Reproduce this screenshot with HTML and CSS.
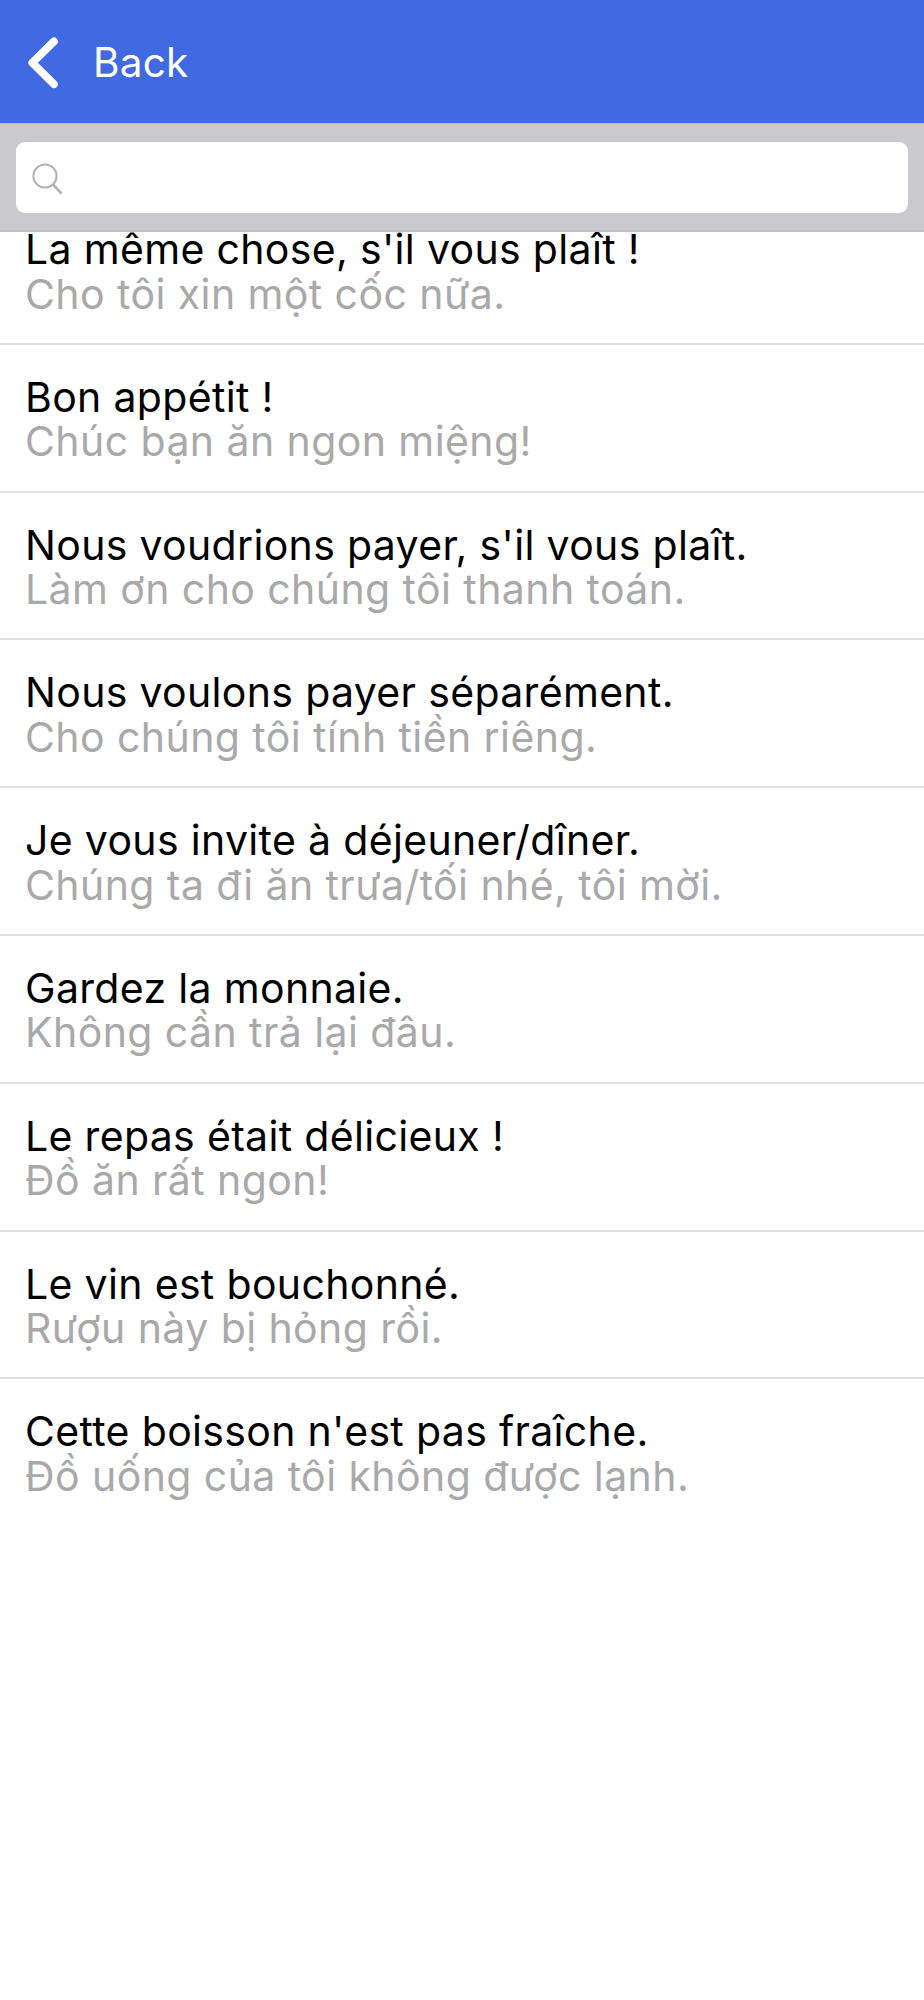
FILE: index.html
```
<!DOCTYPE html>
<html lang="fr">
<head>
  <meta charset="utf-8">
  <title>Phrases</title>
  <link rel="stylesheet" href="styles.css">
</head>
<body>

<header class="navbar">
  <svg class="chevron" width="32" height="54" viewBox="0 0 32 54">
    <path d="M27 5.4L5.3 26.8L27 48.2" fill="none" stroke="#fff" stroke-width="7.8" stroke-linecap="round" stroke-linejoin="round"/>
  </svg>
  <span class="back">Back</span>
</header>

<div class="searchbar">
  <div class="field">
    <svg width="32" height="32" viewBox="0 0 32 32" fill="none" stroke="#b2b2b2" stroke-width="2">
      <circle cx="13" cy="13" r="11.6"/>
      <path d="M21 21.5L29.5 30.5" stroke-width="2.6"/>
    </svg>
  </div>
</div>

<div class="scroll">
<ul class="phrases">
  <li><b>La même chose, s'il vous plaît !</b><i>Cho tôi xin một cốc nữa.</i></li>
  <li><b>Bon appétit !</b><i>Chúc bạn ăn ngon miệng!</i></li>
  <li><b>Nous voudrions payer, s'il vous plaît.</b><i>Làm ơn cho chúng tôi thanh toán.</i></li>
  <li><b>Nous voulons payer séparément.</b><i>Cho chúng tôi tính tiền riêng.</i></li>
  <li><b>Je vous invite à déjeuner/dîner.</b><i>Chúng ta đi ăn trưa/tối nhé, tôi mời.</i></li>
  <li><b>Gardez la monnaie.</b><i>Không cần trả lại đâu.</i></li>
  <li><b>Le repas était délicieux !</b><i>Đồ ăn rất ngon!</i></li>
  <li><b>Le vin est bouchonné.</b><i>Rượu này bị hỏng rồi.</i></li>
  <li><b>Cette boisson n'est pas fraîche.</b><i>Đồ uống của tôi không được lạnh.</i></li>
</ul>
</div>

</body>
</html>
```
FILE: styles.css
```
* { box-sizing: border-box; }
html, body {
  margin: 0; padding: 0; background: #fff;
}
body {
  height: 2000px;
  overflow: hidden;
  font-family: Inter, "Liberation Sans", sans-serif;
  font-size: 41px;
}

.navbar {
  display: flex;
  align-items: center;
  height: 123px;
  padding: 2px 0 0 27px;
  background: #4169e1;
  color: #fff;
}
.back {
  margin-left: 34px;
  font-size: 40.5px;
  letter-spacing: .2px;
}

.searchbar {
  height: 109px;
  padding: 18px 16px 0;
  background: #c9c9ce;
  border-top: 1px solid #b4bade;
  border-bottom: 2px solid #bfbfc4;
}
.field {
  display: flex;
  align-items: center;
  height: 71px;
  padding: 3px 0 0 16px;
  background: #fff;
  border-radius: 9px;
}

.scroll { overflow: hidden; }
.phrases {
  list-style: none;
  margin: -35px 0 0;
  padding: 0;
}
.phrases li {
  height: 147.8px;
  padding: 30px 25px 0;
  border-bottom: 2px solid #e0e0e0;
}
.phrases li:last-child { border-bottom: none; }
b, i {
  display: block;
  font-weight: normal;
  font-style: normal;
  line-height: 44.5px;
  white-space: nowrap;
}
b { color: #000; letter-spacing: .33px; }
i { color: #a9a9a9; letter-spacing: .42px; }
```
